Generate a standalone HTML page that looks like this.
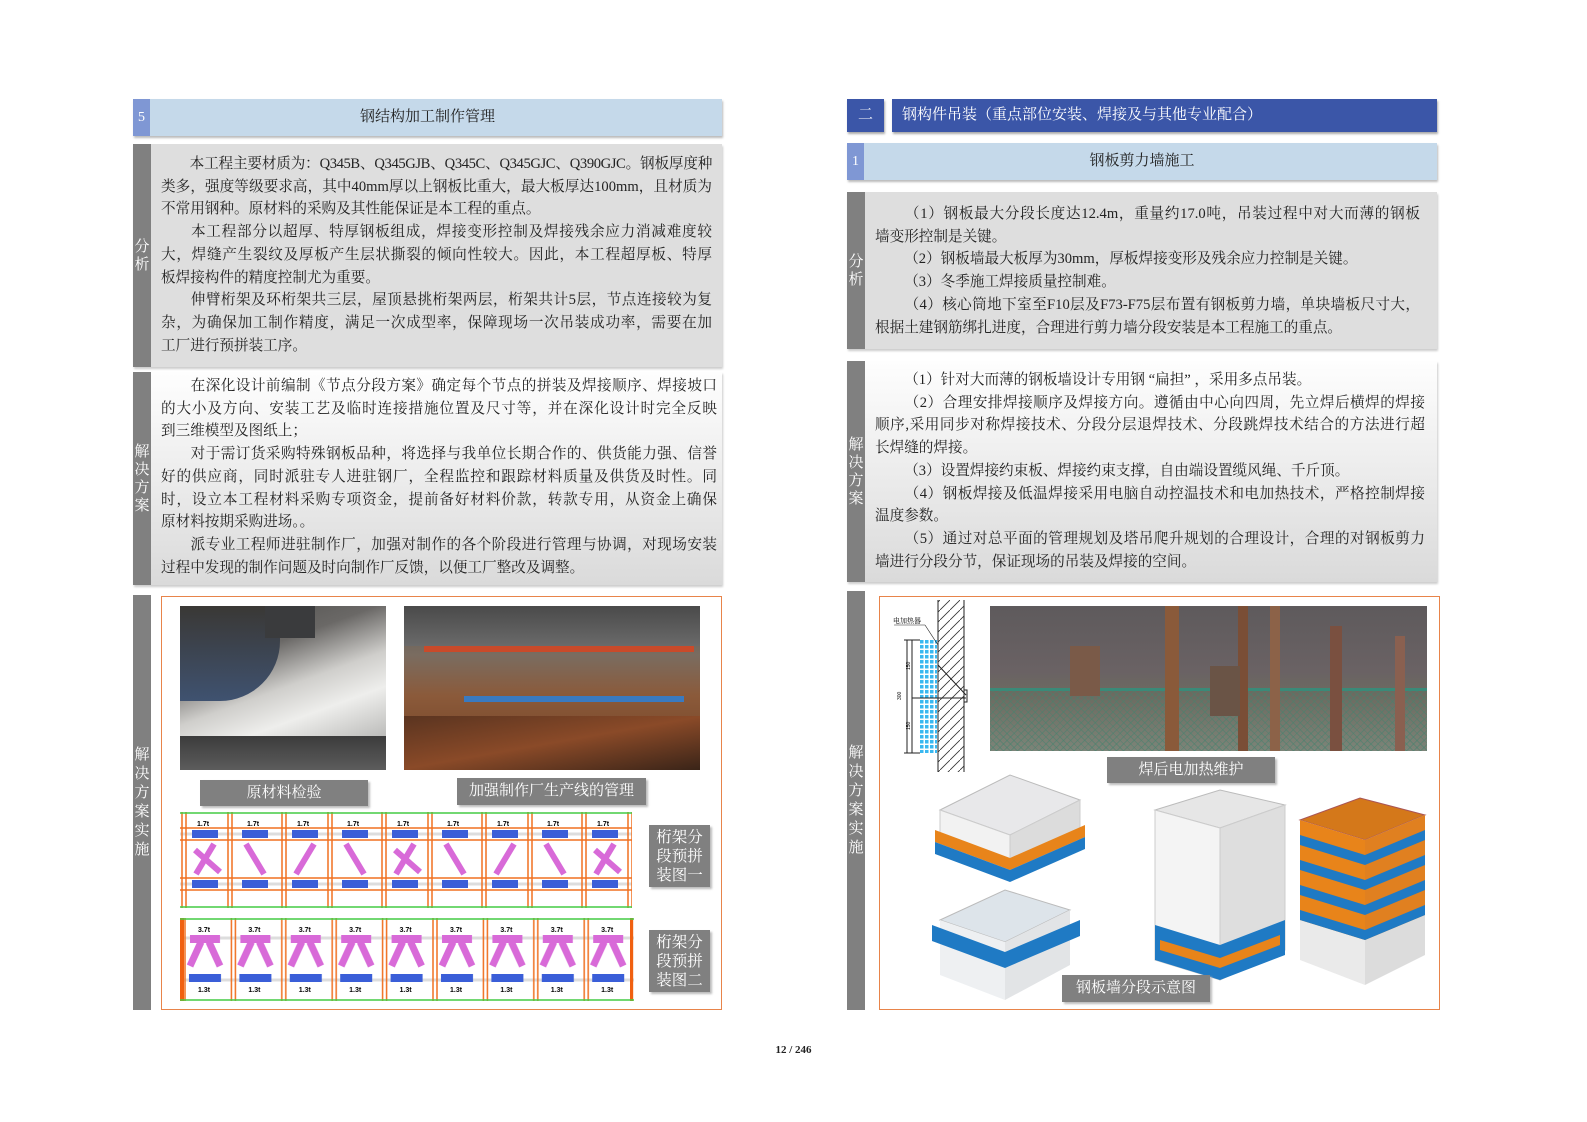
<!DOCTYPE html>
<html><head><meta charset="utf-8">
<style>
*{margin:0;padding:0;box-sizing:border-box}
body{width:1587px;height:1122px;background:#fff;position:relative;overflow:hidden;font-family:"Liberation Serif","Noto Serif CJK SC",serif;color:#222}
.a{position:absolute}
.num{background:#7f97d4;color:#fff;font-size:14px;line-height:37px;padding-left:5px}
.band{background:#c5d9ea;font-size:15px;text-align:center;box-shadow:1px 2px 2px #bbb}
.lab{background:#808080;color:#fff;font-size:15px;line-height:18px;text-align:center;display:flex;flex-direction:column;justify-content:center;align-items:center}
.txt{font-size:14.6px;line-height:22.7px}
.txt div{white-space:nowrap}
.j{text-align:justify;text-align-last:justify}
.g1{background:#dedede;box-shadow:1px 2px 2px #ccc}
.g2{background:linear-gradient(#fefefe,#dadada);box-shadow:1px 2px 2px #ccc}
.cap{background:#808080;color:#fff;font-size:15px;text-align:center;box-shadow:2px 2px 2px #bbb;font-family:"Liberation Serif","Noto Serif CJK SC",serif}
</style></head><body>

<!-- LEFT -->
<div class="a band" style="left:133px;top:99px;width:589px;height:37px;line-height:37px">钢结构加工制作管理</div>
<div class="a num" style="left:133px;top:99px;width:17px;height:37px">5</div>

<div class="a g1" style="left:133px;top:144px;width:589px;height:223px"></div>
<div class="a lab" style="left:133px;top:144px;width:18px;height:223px">分<br>析</div>
<div class="a txt" style="left:161px;top:153px;width:551px">
<div class="j" style="letter-spacing:-0.4px">&emsp;&emsp;本工程主要材质为：Q345B、Q345GJB、Q345C、Q345GJC、Q390GJC。钢板厚度种</div>
<div class="j">类多，强度等级要求高，其中40mm厚以上钢板比重大，最大板厚达100mm，且材质为</div>
<div>不常用钢种。原材料的采购及其性能保证是本工程的重点。</div>
<div class="j">&emsp;&emsp;本工程部分以超厚、特厚钢板组成，焊接变形控制及焊接残余应力消减难度较</div>
<div class="j">大，焊缝产生裂纹及厚板产生层状撕裂的倾向性较大。因此，本工程超厚板、特厚</div>
<div>板焊接构件的精度控制尤为重要。</div>
<div class="j">&emsp;&emsp;伸臂桁架及环桁架共三层，屋顶悬挑桁架两层，桁架共计5层，节点连接较为复</div>
<div class="j">杂，为确保加工制作精度，满足一次成型率，保障现场一次吊装成功率，需要在加</div>
<div>工厂进行预拼装工序。</div>
</div>

<div class="a g2" style="left:133px;top:372px;width:589px;height:213px"></div>
<div class="a lab" style="left:133px;top:372px;width:18px;height:213px">解<br>决<br>方<br>案</div>
<div class="a txt" style="left:161px;top:375px;width:556px">
<div class="j">&emsp;&emsp;在深化设计前编制《节点分段方案》确定每个节点的拼装及焊接顺序、焊接坡口</div>
<div class="j">的大小及方向、安装工艺及临时连接措施位置及尺寸等，并在深化设计时完全反映</div>
<div>到三维模型及图纸上；</div>
<div class="j">&emsp;&emsp;对于需订货采购特殊钢板品种，将选择与我单位长期合作的、供货能力强、信誉</div>
<div class="j">好的供应商，同时派驻专人进驻钢厂，全程监控和跟踪材料质量及供货及时性。同</div>
<div class="j">时，设立本工程材料采购专项资金，提前备好材料价款，转款专用，从资金上确保</div>
<div>原材料按期采购进场。。</div>
<div class="j">&emsp;&emsp;派专业工程师进驻制作厂，加强对制作的各个阶段进行管理与协调，对现场安装</div>
<div>过程中发现的制作问题及时向制作厂反馈，以便工厂整改及调整。</div>
</div>

<div class="a lab" style="left:133px;top:595px;width:18px;height:415px;line-height:19px">解<br>决<br>方<br>案<br>实<br>施</div>
<div class="a" style="left:161px;top:596px;width:561px;height:414px;border:1px solid #e8844a"></div>

<!-- photo1 -->
<div class="a" style="left:180px;top:606px;width:206px;height:164px;overflow:hidden;background:linear-gradient(160deg,#4a4a48 0%,#6a6866 30%,#cfcecb 50%,#eeeeec 65%,#9a9a98 100%)">
 <div class="a" style="left:0;top:0;width:100px;height:95px;background:linear-gradient(#3a3835,#3f5270);border-radius:0 0 60px 0"></div>
 <div class="a" style="left:85px;top:0;width:50px;height:32px;background:#3a3b3d"></div>
 <div class="a" style="left:0;top:130px;width:206px;height:34px;background:linear-gradient(#3c3c3c,#5c5c5c)"></div>
</div>
<!-- photo2 -->
<div class="a" style="left:404px;top:606px;width:296px;height:164px;overflow:hidden;background:linear-gradient(#5a5a58 0%,#7a6c60 30%,#8b5a3a 55%,#6e3e22 100%)">
 <div class="a" style="left:0;top:0;width:296px;height:40px;background:linear-gradient(#4a4a4a,#6a6a6a)"></div>
 <div class="a" style="left:20px;top:40px;width:270px;height:6px;background:#c94a2a"></div>
 <div class="a" style="left:60px;top:90px;width:220px;height:6px;background:#3a7ac0"></div>
 <div class="a" style="left:0;top:110px;width:296px;height:54px;background:linear-gradient(170deg,#5a3420,#8a4a28 50%,#3a2418)"></div>
</div>
<div class="a cap" style="left:200px;top:780px;width:168px;height:26px;line-height:26px">原材料检验</div>
<div class="a cap" style="left:457px;top:778px;width:189px;height:27px;line-height:27px">加强制作厂生产线的管理</div>

<svg class="a" style="left:180px;top:812px" width="452" height="96" viewBox="0 0 452 96">
<defs>
<pattern id="p1" width="100" height="96" patternUnits="userSpaceOnUse">
<rect width="100" height="96" fill="#fff"/>
<line x1="0" y1="22" x2="100" y2="22" stroke="#ddd" stroke-width="3"/>
<line x1="0" y1="72" x2="100" y2="72" stroke="#ddd" stroke-width="3"/>
<g stroke="#f07020" stroke-width="1.5" fill="none">
<line x1="2" y1="0" x2="2" y2="96"/><line x1="6" y1="0" x2="6" y2="96"/>
<line x1="48" y1="0" x2="48" y2="96"/><line x1="52" y1="0" x2="52" y2="96"/>
<line x1="0" y1="16" x2="100" y2="16"/><line x1="0" y1="28" x2="100" y2="28"/>
<line x1="0" y1="66" x2="100" y2="66"/><line x1="0" y1="78" x2="100" y2="78"/>
</g>
<rect x="12" y="18" width="26" height="8" fill="#3a5ed8"/><rect x="12" y="68" width="26" height="8" fill="#3a5ed8"/>
<rect x="62" y="18" width="26" height="8" fill="#3a5ed8"/><rect x="62" y="68" width="26" height="8" fill="#3a5ed8"/>
<line x1="16" y1="62" x2="34" y2="32" stroke="#d86ad8" stroke-width="6"/>
<line x1="66" y1="32" x2="84" y2="62" stroke="#d86ad8" stroke-width="6"/>
<text x="17" y="14" font-size="7" font-weight="bold" font-family="Liberation Sans">1.7t</text>
<text x="67" y="14" font-size="7" font-weight="bold" font-family="Liberation Sans">1.7t</text>
</pattern></defs>
<rect width="452" height="96" fill="url(#p1)"/>
<line x1="0" y1="1" x2="452" y2="1" stroke="#4c4" stroke-width="1.5"/>
<line x1="0" y1="95" x2="452" y2="95" stroke="#4c4" stroke-width="1.5"/>
<line x1="15" y1="38" x2="40" y2="60" stroke="#d86ad8" stroke-width="6"/>
<line x1="215" y1="38" x2="240" y2="60" stroke="#d86ad8" stroke-width="6"/>
<line x1="415" y1="38" x2="440" y2="60" stroke="#d86ad8" stroke-width="6"/>
</svg>

<svg class="a" style="left:180px;top:918px" width="454" height="83" viewBox="0 0 454 83">
<defs>
<pattern id="p2" width="50.4" height="83" patternUnits="userSpaceOnUse">
<rect width="51" height="83" fill="#fff"/>
<line x1="0" y1="20" x2="51" y2="20" stroke="#ddd" stroke-width="3"/>
<line x1="0" y1="62" x2="51" y2="62" stroke="#ddd" stroke-width="3"/>
<g stroke="#f07020" stroke-width="1.5"><line x1="1" y1="0" x2="1" y2="83"/><line x1="5" y1="0" x2="5" y2="83"/></g>
<rect x="10" y="17" width="30" height="8" fill="#d86ad8"/>
<line x1="21" y1="24" x2="10" y2="48" stroke="#d86ad8" stroke-width="7"/>
<line x1="29" y1="24" x2="40" y2="48" stroke="#d86ad8" stroke-width="7"/>
<rect x="9" y="56" width="32" height="8" fill="#3a5ed8"/>
<text x="18" y="14" font-size="7" font-weight="bold" font-family="Liberation Sans">3.7t</text>
<text x="18" y="74" font-size="7" font-weight="bold" font-family="Liberation Sans">1.3t</text>
</pattern></defs>
<rect width="454" height="83" fill="url(#p2)"/>
<rect x="0" y="0" width="4" height="83" fill="#f06010"/>
<rect x="450" y="0" width="3" height="83" fill="#f06010"/>
<line x1="0" y1="1" x2="454" y2="1" stroke="#4c4" stroke-width="1.5"/>
<line x1="0" y1="82" x2="454" y2="82" stroke="#4c4" stroke-width="1.5"/>
</svg>
<div class="a cap" style="left:649px;top:825px;width:61px;height:62px;font-size:15.5px;line-height:19px;padding-top:3px">桁架分<br>段预拼<br>装图一</div>
<div class="a cap" style="left:649px;top:930px;width:61px;height:62px;font-size:15.5px;line-height:19px;padding-top:3px">桁架分<br>段预拼<br>装图二</div>

<!-- RIGHT -->
<div class="a" style="left:847px;top:99px;width:37px;height:33px;background:#3b56a8;color:#fff;font-size:15px;line-height:33px;text-align:center;box-shadow:1px 2px 2px #aaa">二</div>
<div class="a" style="left:892px;top:99px;width:545px;height:33px;background:#3b56a8;color:#fff;font-size:15px;line-height:33px;padding-left:10px;box-shadow:1px 2px 2px #aaa">钢构件吊装（重点部位安装、焊接及与其他专业配合）</div>

<div class="a band" style="left:847px;top:143px;width:590px;height:37px;line-height:37px">钢板剪力墙施工</div>
<div class="a num" style="left:847px;top:143px;width:17px;height:37px">1</div>

<div class="a g1" style="left:847px;top:192px;width:590px;height:157px"></div>
<div class="a lab" style="left:847px;top:192px;width:18px;height:157px">分<br>析</div>
<div class="a txt" style="left:875px;top:203px;width:545px">
<div class="j">&emsp;&emsp;（1）钢板最大分段长度达12.4m，重量约17.0吨，吊装过程中对大而薄的钢板</div>
<div>墙变形控制是关键。</div>
<div>&emsp;&emsp;（2）钢板墙最大板厚为30mm，厚板焊接变形及残余应力控制是关键。</div>
<div>&emsp;&emsp;（3）冬季施工焊接质量控制难。</div>
<div class="j">&emsp;&emsp;（4）核心筒地下室至F10层及F73-F75层布置有钢板剪力墙，单块墙板尺寸大，</div>
<div>根据土建钢筋绑扎进度，合理进行剪力墙分段安装是本工程施工的重点。</div>
</div>

<div class="a g2" style="left:847px;top:361px;width:590px;height:221px"></div>
<div class="a lab" style="left:847px;top:361px;width:18px;height:221px">解<br>决<br>方<br>案</div>
<div class="a txt" style="left:875px;top:369px;width:550px">
<div>&emsp;&emsp;（1）针对大而薄的钢板墙设计专用钢 “扁担” ，采用多点吊装。</div>
<div class="j">&emsp;&emsp;（2）合理安排焊接顺序及焊接方向。遵循由中心向四周，先立焊后横焊的焊接</div>
<div class="j">顺序,采用同步对称焊接技术、分段分层退焊技术、分段跳焊技术结合的方法进行超</div>
<div>长焊缝的焊接。</div>
<div>&emsp;&emsp;（3）设置焊接约束板、焊接约束支撑，自由端设置缆风绳、千斤顶。</div>
<div class="j">&emsp;&emsp;（4）钢板焊接及低温焊接采用电脑自动控温技术和电加热技术，严格控制焊接</div>
<div>温度参数。</div>
<div class="j">&emsp;&emsp;（5）通过对总平面的管理规划及塔吊爬升规划的合理设计，合理的对钢板剪力</div>
<div>墙进行分段分节，保证现场的吊装及焊接的空间。</div>
</div>

<div class="a lab" style="left:847px;top:591px;width:18px;height:419px;line-height:19px">解<br>决<br>方<br>案<br>实<br>施</div>
<div class="a" style="left:879px;top:596px;width:561px;height:414px;border:1px solid #e8844a"></div>

<!-- heater detail -->
<svg class="a" style="left:890px;top:600px" width="85" height="172" viewBox="0 0 85 172">
<defs>
<pattern id="hat" width="10" height="10" patternUnits="userSpaceOnUse"><line x1="0" y1="10" x2="10" y2="0" stroke="#333" stroke-width="0.8"/></pattern>
<pattern id="grd" width="5" height="5" patternUnits="userSpaceOnUse"><rect width="5" height="5" fill="#fff"/><rect width="3.5" height="3.5" fill="#3ab8f0"/></pattern>
</defs>
<rect x="48" y="0" width="26" height="172" fill="url(#hat)"/>
<line x1="48" y1="0" x2="48" y2="172" stroke="#222"/><line x1="74" y1="0" x2="74" y2="172" stroke="#222"/>
<rect x="30" y="40" width="17" height="113" fill="url(#grd)"/>
<line x1="17" y1="40" x2="17" y2="153" stroke="#222"/><line x1="22" y1="40" x2="22" y2="153" stroke="#222"/>
<line x1="14" y1="40" x2="30" y2="40" stroke="#222"/><line x1="14" y1="153" x2="30" y2="153" stroke="#222"/>
<line x1="22" y1="98" x2="76" y2="98" stroke="#222"/>
<line x1="48" y1="65" x2="76" y2="95" stroke="#222"/>
<rect x="74" y="90" width="3" height="12" fill="none" stroke="#222"/>
<line x1="4" y1="25" x2="35" y2="25" stroke="#222" stroke-width=".6"/>
<line x1="35" y1="25" x2="48" y2="45" stroke="#222" stroke-width=".6"/>
<text x="3" y="23" font-size="7" font-family="Noto Serif CJK SC,serif">电加热器</text>
<text x="20" y="70" font-size="5" font-family="Liberation Sans" transform="rotate(-90 20 70)">150</text>
<text x="11" y="100" font-size="5" font-family="Liberation Sans" transform="rotate(-90 11 100)">300</text>
<text x="20" y="130" font-size="5" font-family="Liberation Sans" transform="rotate(-90 20 130)">150</text>
</svg>

<!-- photo right -->
<div class="a" style="left:990px;top:606px;width:437px;height:145px;overflow:hidden;background:linear-gradient(#5e5a5c 0%,#6a6264 45%,#6c6a60 60%,#7c8478 100%)">
 <div class="a" style="left:0;top:82px;width:437px;height:3px;background:#3a8a78"></div>
 <div class="a" style="left:0;top:85px;width:437px;height:60px;background:repeating-linear-gradient(45deg,transparent 0 4px,rgba(70,130,110,.5) 4px 5px),repeating-linear-gradient(-45deg,transparent 0 4px,rgba(70,130,110,.5) 4px 5px)"></div>
 <div class="a" style="left:175px;top:0;width:14px;height:145px;background:#8a5a3a"></div>
 <div class="a" style="left:248px;top:0;width:10px;height:145px;background:#7a4e36"></div>
 <div class="a" style="left:280px;top:0;width:10px;height:145px;background:#8c6248"></div>
 <div class="a" style="left:340px;top:20px;width:12px;height:125px;background:#7a5040"></div>
 <div class="a" style="left:405px;top:30px;width:10px;height:115px;background:#8a6050"></div>
 <div class="a" style="left:80px;top:40px;width:30px;height:50px;background:#7a5a48"></div>
 <div class="a" style="left:220px;top:60px;width:30px;height:50px;background:#6a5446"></div>
</div>
<div class="a cap" style="left:1107px;top:757px;width:168px;height:26px;line-height:26px">焊后电加热维护</div>

<!-- buildings -->
<svg class="a" style="left:930px;top:770px" width="500" height="236" viewBox="0 0 500 236">
<polygon points="10,40 80,5 150,30 80,65" fill="#e8e8ea" stroke="#bbb"/>
<polygon points="10,40 80,65 80,110 10,85" fill="#f2f2f2" stroke="#ccc"/>
<polygon points="80,65 150,30 150,75 80,110" fill="#dcdcdc" stroke="#ccc"/>
<polygon points="5,60 80,88 80,100 5,72" fill="#e8841a"/>
<polygon points="80,88 155,55 155,67 80,100" fill="#e8841a"/>
<polygon points="5,72 80,100 80,112 5,84" fill="#1f7ac4"/>
<polygon points="80,100 155,67 155,79 80,112" fill="#1f7ac4"/>
<polygon points="10,150 75,120 140,140 75,172" fill="#dde4ea" stroke="#bbb"/>
<polygon points="10,150 75,172 75,230 10,205" fill="#eef0f2"/>
<polygon points="75,172 140,140 140,195 75,230" fill="#e2e4e6"/>
<polygon points="2,155 75,182 75,198 2,171" fill="#1f7ac4"/>
<polygon points="75,182 150,150 150,166 75,198" fill="#1f7ac4"/>
<polygon points="225,40 290,20 355,35 290,58" fill="#e6e6e6" stroke="#bbb"/>
<polygon points="225,40 290,58 290,210 225,190" fill="#f4f4f4" stroke="#ccc"/>
<polygon points="290,58 355,35 355,180 290,210" fill="#dedede" stroke="#ccc"/>
<polygon points="225,155 290,175 290,210 225,190" fill="#1f7ac4"/>
<polygon points="290,175 355,150 355,185 290,210" fill="#1f7ac4"/>
<polygon points="230,170 290,188 290,198 230,180" fill="#e8841a"/>
<polygon points="290,188 350,165 350,175 290,198" fill="#e8841a"/>
<polygon points="370,50 430,28 495,45 435,70" fill="#d4781a" stroke="#a55"/>
<polygon points="370,50 435,70 435,215 370,190" fill="#eaeaea"/>
<polygon points="435,70 495,45 495,185 435,215" fill="#dcdcdc"/>
<polygon points="370,50 435,70 435,170 370,150" fill="#e8841a"/>
<polygon points="435,70 495,45 495,145 435,170" fill="#e08020"/>
<g fill="#1f7ac4">
<polygon points="370,65 435,85 435,95 370,75"/><polygon points="435,85 495,60 495,70 435,95"/>
<polygon points="370,90 435,110 435,120 370,100"/><polygon points="435,110 495,85 495,95 435,120"/>
<polygon points="370,115 435,135 435,145 370,125"/><polygon points="435,135 495,110 495,120 435,145"/>
<polygon points="370,140 435,160 435,170 370,150"/><polygon points="435,160 495,135 495,145 435,170"/>
</g>
</svg>
<div class="a cap" style="left:1062px;top:975px;width:148px;height:27px;line-height:27px">钢板墙分段示意图</div>

<div class="a" style="left:0;top:1044px;width:1587px;text-align:center;font-size:11px;font-weight:bold;font-family:'Liberation Serif',serif">12 / 246</div>
</body></html>
